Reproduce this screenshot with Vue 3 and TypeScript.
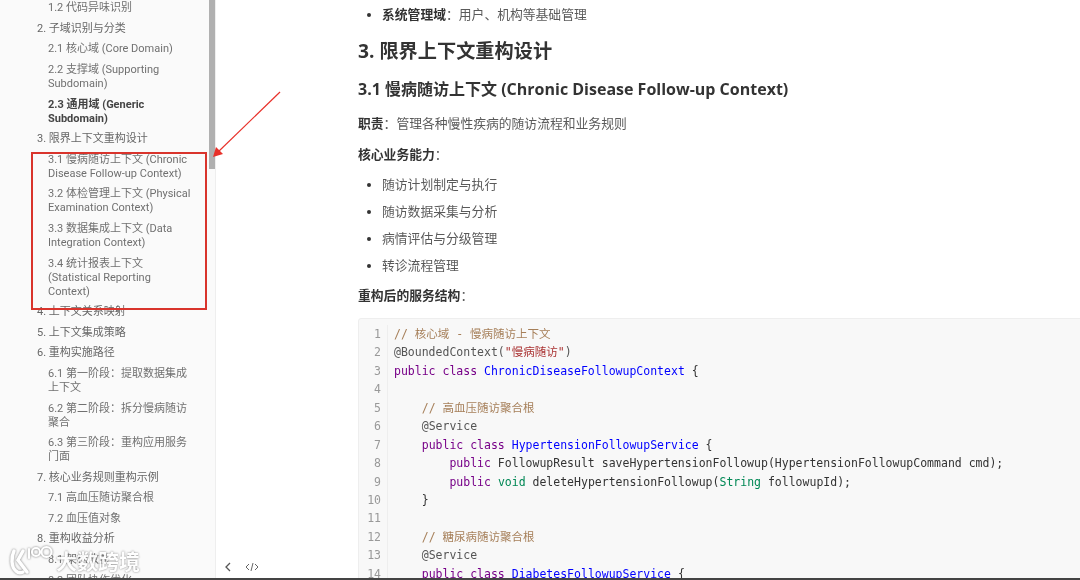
<script setup lang="ts">
interface TocItem { text: string; sub?: boolean; bold?: boolean }
const toc: TocItem[] = [
  { text: '1.2 代码异味识别', sub: true },
  { text: '2. 子域识别与分类' },
  { text: '2.1 核心域 (Core Domain)', sub: true },
  { text: '2.2 支撑域 (Supporting Subdomain)', sub: true },
  { text: '2.3 通用域 (Generic Subdomain)', sub: true, bold: true },
  { text: '3. 限界上下文重构设计' },
  { text: '3.1 慢病随访上下文 (Chronic Disease Follow-up Context)', sub: true },
  { text: '3.2 体检管理上下文 (Physical Examination Context)', sub: true },
  { text: '3.3 数据集成上下文 (Data Integration Context)', sub: true },
  { text: '3.4 统计报表上下文 (Statistical Reporting Context)', sub: true },
  { text: '4. 上下文关系映射' },
  { text: '5. 上下文集成策略' },
  { text: '6. 重构实施路径' },
  { text: '6.1 第一阶段：提取数据集成上下文', sub: true },
  { text: '6.2 第二阶段：拆分慢病随访聚合', sub: true },
  { text: '6.3 第三阶段：重构应用服务门面', sub: true },
  { text: '7. 核心业务规则重构示例' },
  { text: '7.1 高血压随访聚合根', sub: true },
  { text: '7.2 血压值对象', sub: true },
  { text: '8. 重构收益分析' },
  { text: '8.1 架构收益', sub: true },
  { text: '8.2 团队协作优化', sub: true },
]
const caps = ['随访计划制定与执行', '随访数据采集与分析', '病情评估与分级管理', '转诊流程管理']
type Tok = [string, string]
const code: Tok[][] = [
  [['c', '// 核心域 - 慢病随访上下文']],
  [['m', '@BoundedContext('], ['s', '"慢病随访"'], ['m', ')']],
  [['k', 'public class '], ['t', 'ChronicDiseaseFollowupContext'], ['p', ' {']],
  [],
  [['p', '    '], ['c', '// 高血压随访聚合根']],
  [['p', '    '], ['m', '@Service']],
  [['p', '    '], ['k', 'public class '], ['t', 'HypertensionFollowupService'], ['p', ' {']],
  [['p', '        '], ['k', 'public'], ['p', ' FollowupResult saveHypertensionFollowup(HypertensionFollowupCommand cmd);']],
  [['p', '        '], ['k', 'public'], ['p', ' '], ['v', 'void'], ['p', ' deleteHypertensionFollowup('], ['v', 'String'], ['p', ' followupId);']],
  [['p', '    }']],
  [],
  [['p', '    '], ['c', '// 糖尿病随访聚合根']],
  [['p', '    '], ['m', '@Service']],
  [['p', '    '], ['k', 'public class '], ['t', 'DiabetesFollowupService'], ['p', ' {']],
]
</script>

<template>
  <div class="page">
    <aside class="side">
      <nav class="toc">
        <a v-for="t in toc" :key="t.text" class="toc-item" :class="{ sub: t.sub, bold: t.bold }">{{ t.text }}</a>
      </nav>
      <div class="thumb"></div>
    </aside>
    <div class="side-tools">
      <svg width="10" height="12" viewBox="0 0 10 12" fill="none" stroke="#555" stroke-width="1.3"><path d="M7 2 3 6l4 4" /></svg>
      <svg width="14" height="12" viewBox="0 0 14 12" fill="none" stroke="#666" stroke-width="1"><path d="M4 3 1 6l3 3M10 3l3 3-3 3M8 2 6 10" /></svg>
    </div>

    <main class="main">
      <ul class="list first">
        <li><b>系统管理域</b>：用户、机构等基础管理</li>
      </ul>
      <h2>3. 限界上下文重构设计</h2>
      <h3>3.1 慢病随访上下文 (Chronic Disease Follow-up Context)</h3>
      <p><b>职责</b>：管理各种慢性疾病的随访流程和业务规则</p>
      <p><b>核心业务能力</b>：</p>
      <ul class="list">
        <li v-for="c in caps" :key="c">{{ c }}</li>
      </ul>
      <p><b>重构后的服务结构</b>：</p>
      <div class="code">
        <div v-for="(line, i) in code" :key="i" class="line">
          <span class="no">{{ i + 1 }}</span>
          <span class="src"><span v-for="(tok, j) in line" :key="j" :class="tok[0]">{{ tok[1] }}</span></span>
        </div>
      </div>
    </main>

    <div class="mark-box"></div>
    <svg class="arrow" width="80" height="80" viewBox="0 0 80 80" fill="none" stroke="#e8312a" stroke-width="1.2">
      <path d="M69 1 6 62" />
      <path d="M2 66 5 56 12 63Z" fill="#e8312a" stroke="none" />
    </svg>

    <div class="watermark">
      <svg class="wm-logo" width="47" height="32" viewBox="0 0 47 32" fill="none" stroke="#fff" stroke-linecap="round">
        <path d="M6 6C3 12 3 22 8 26c2 2 5 2 7 1" stroke-width="3.5" />
        <path d="M15 6 10 15l9 12" stroke-width="3.5" />
        <path d="M21 4v9" stroke-width="2.2" />
        <circle cx="28" cy="7" r="4" stroke-width="2.2" />
        <circle cx="38.5" cy="7" r="5" stroke-width="2.2" />
      </svg>
      <span>大数跨境</span>
    </div>
    <div class="edge"></div>
  </div>
</template>

<style>
html, body { margin: 0; background: #fff; }
</style>

<style scoped>
.page {
  position: relative;
  display: flex;
  width: 1080px;
  height: 580px;
  overflow: hidden;
  background: #fff;
  color: #333;
  font-family: "Open Sans", "Noto Sans CJK SC", sans-serif;
  filter: blur(.3px);
}
.side {
  position: relative;
  flex: 0 0 216px;
  box-sizing: border-box;
  height: 580px;
  overflow: hidden;
  background: #fafafa;
  border-right: 1px solid #eee;
}
.toc {
  display: flex;
  flex-direction: column;
  gap: 6.6px;
  width: 155px;
  margin-top: 1.2px;
  padding-left: 37px;
  font-family: Roboto, "Noto Sans CJK SC", sans-serif;
  font-size: 11px;
  line-height: 14px;
  color: #666;
}
.toc-item { flex: none; }
.toc-item.sub { padding-left: 11px; color: #707070; }
.toc-item.bold { font-weight: 700; color: #444; }
.thumb {
  position: absolute;
  top: 0;
  right: 0;
  width: 6px;
  height: 169px;
  background: #b0b0b0;
}
.side-tools {
  position: absolute;
  left: 223px;
  top: 561px;
  display: flex;
  align-items: center;
  gap: 12px;
}
.main {
  flex: 1;
  min-width: 0;
  padding: 0 0 0 142px;
  font-size: 12.8px;
  line-height: 18px;
  color: #5a5a5a;
}
.main b { color: #333; font-weight: 700; }
.list {
  margin: 0;
  padding: 0 0 0 24px;
}
.list li { height: 27px; line-height: 18px; }
.list li::marker { color: #333; font-size: 12px; }
.list.first { margin-top: 5px; }
h2 {
  margin: 6px 0 0;
  font-size: 19.2px;
  line-height: 26px;
  font-weight: 700;
  color: #333;
}
h3 {
  margin: 14px 0 0;
  font-size: 16px;
  line-height: 22px;
  font-weight: 700;
  color: #333;
}
p { margin: 14px 0 0; }
p + p { margin-top: 13px; }
p + .list { margin-top: 12px; }
.list + p { margin-top: 3px; }
.code {
  width: 900px;
  margin-top: 14px;
  padding: 6px 0;
  background: #f8f8f8;
  border: 1px solid #eee;
  border-radius: 3px;
  font-family: "DejaVu Sans Mono", "Noto Sans CJK SC", monospace;
  font-size: 11.5px;
  line-height: 18.45px;
  color: #333;
}
.line {
  display: flex;
  height: 18.45px;
  white-space: pre;
}
.no {
  flex: 0 0 22px;
  padding-right: 6px;
  text-align: right;
  color: #999;
  border-right: 1px solid #eee;
}
.src { padding-left: 6px; }
.c { color: #a67f59; }
.m { color: #555; }
.s { color: #a33; }
.k { color: #708; }
.t { color: #00f; }
.v { color: #085; }
.p { color: #333; }
.mark-box {
  position: absolute;
  left: 31px;
  top: 152px;
  width: 172px;
  height: 154px;
  border: 2px solid #d9342c;
}
.arrow {
  position: absolute;
  left: 211px;
  top: 91px;
}
.watermark {
  position: absolute;
  left: 8px;
  top: 545px;
  display: flex;
  align-items: center;
  color: #fff;
  font-size: 21px;
  line-height: 32px;
  font-weight: 700;
  text-shadow: 0 0 2px rgba(90, 90, 90, .9);
}
.wm-logo { filter: drop-shadow(0 0 1px rgba(90, 90, 90, .8)); }
.watermark span { margin-left: 1px; opacity: .9; }
.edge {
  position: absolute;
  left: 0;
  right: 0;
  bottom: 0;
  height: 2px;
  background: #444;
}
</style>
